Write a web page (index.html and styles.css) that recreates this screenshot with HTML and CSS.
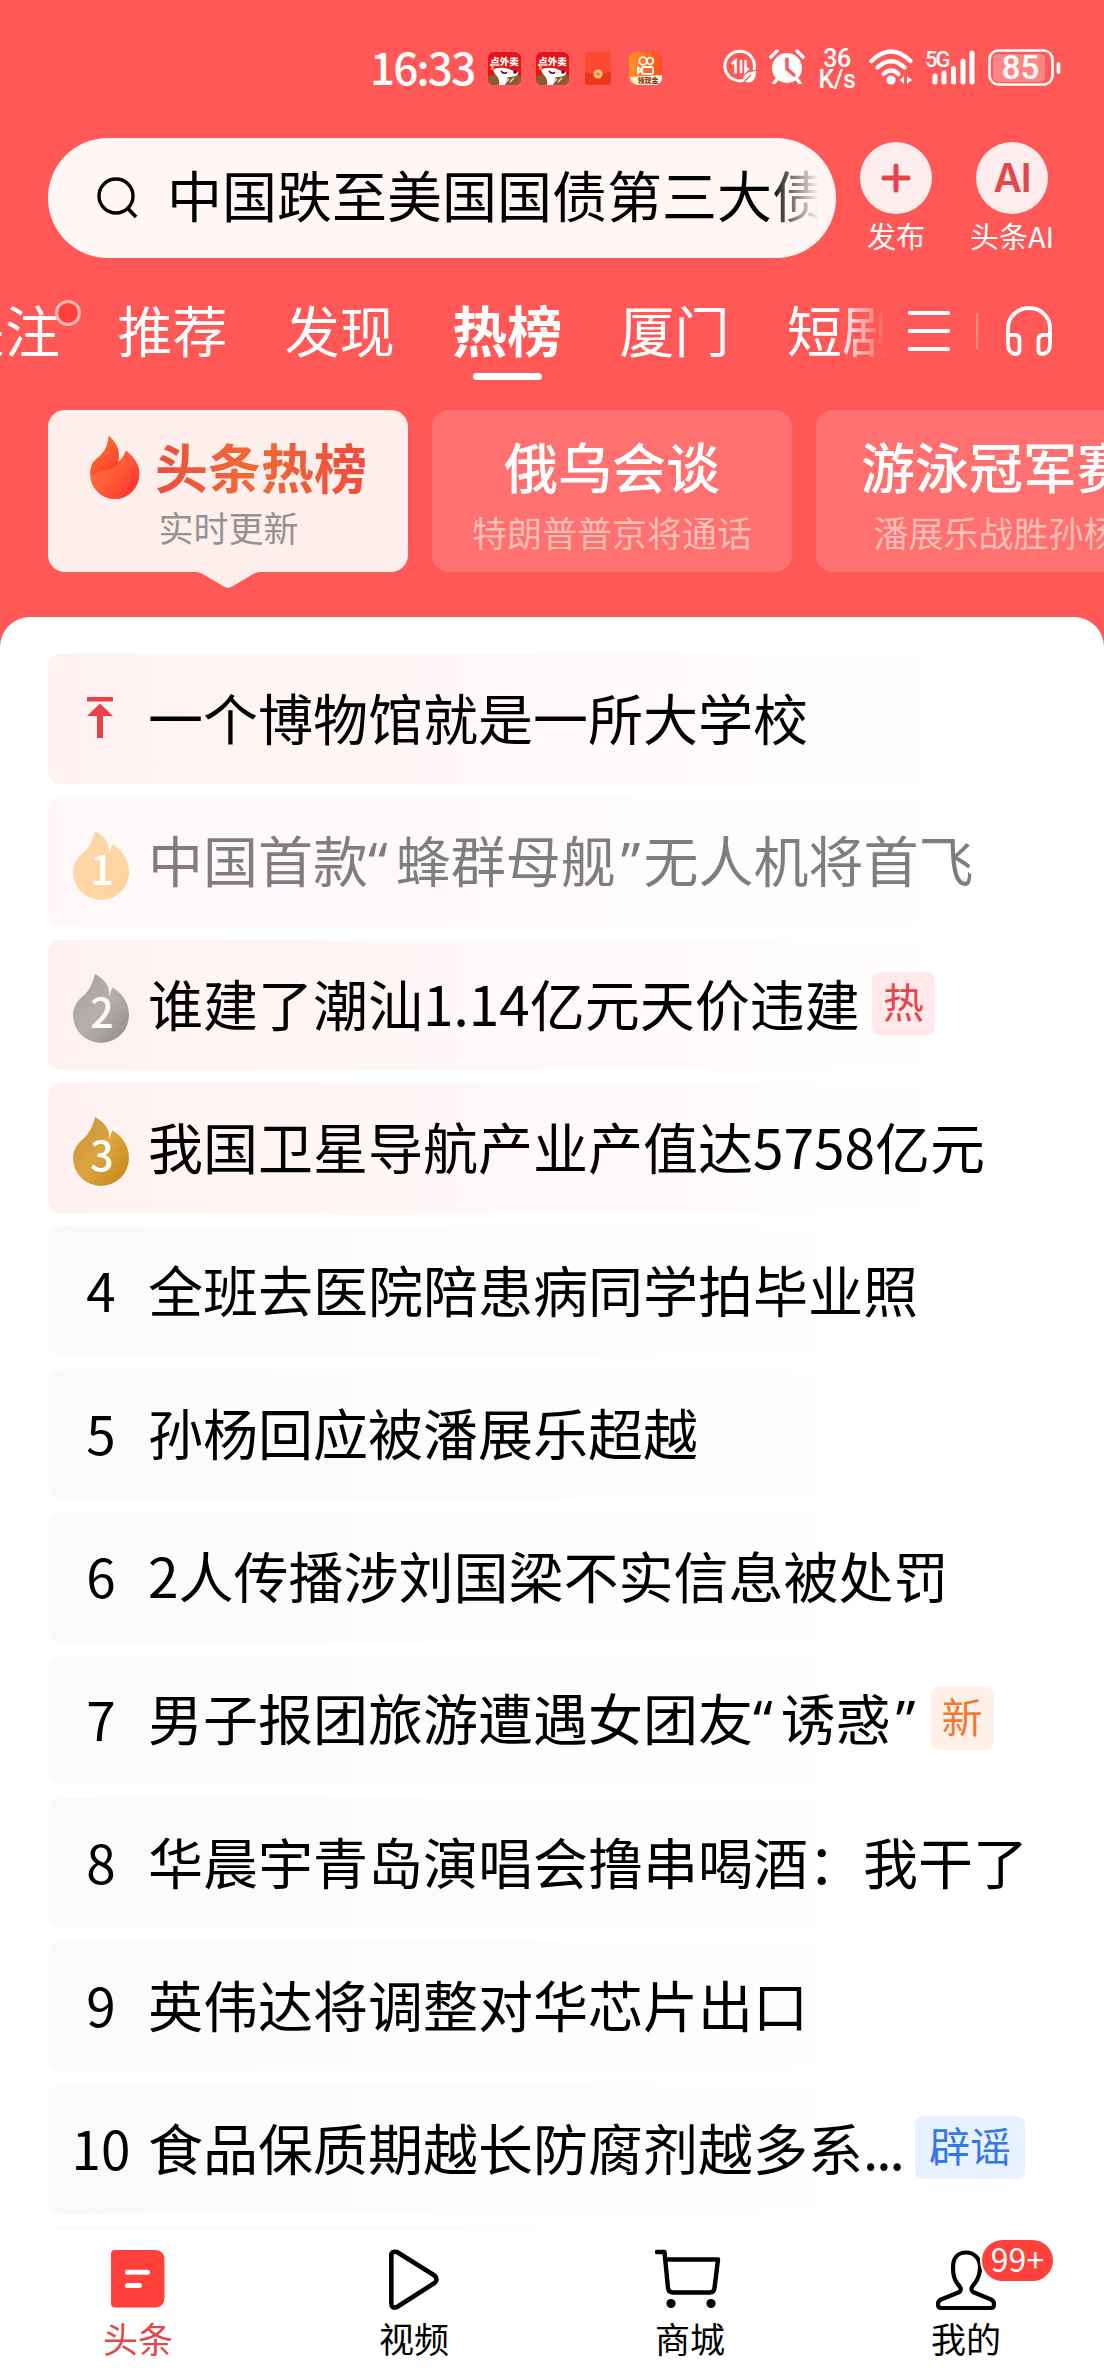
FILE: index.html
```html
<!DOCTYPE html>
<html lang="zh-CN">
<head>
<meta charset="utf-8">
<title>头条热榜</title>
<link rel="stylesheet" href="styles.css">
</head>
<body>
<svg class="defs" width="0" height="0" aria-hidden="true">
  <defs>
    <linearGradient id="gold1" x1="0" y1="0" x2="1" y2="1"><stop offset="0" stop-color="#f3ae4c"/><stop offset=".5" stop-color="#ffb04c"/><stop offset="1" stop-color="#ffa53c"/></linearGradient>
    <linearGradient id="silver" x1="0" y1="0" x2="1" y2="1"><stop offset="0" stop-color="#a29f9c"/><stop offset=".5" stop-color="#b3b0ad"/><stop offset="1" stop-color="#908c88"/></linearGradient>
    <linearGradient id="bronze" x1="0" y1="0" x2="1" y2="1"><stop offset="0" stop-color="#c79040"/><stop offset=".5" stop-color="#dba53e"/><stop offset="1" stop-color="#c38510"/></linearGradient>
    <linearGradient id="fire" x1="0" y1="0" x2="1" y2="1"><stop offset="0" stop-color="#ff7a3c"/><stop offset=".5" stop-color="#ff6038"/><stop offset="1" stop-color="#ff2a30"/></linearGradient>
    <linearGradient id="fireLobe" x1="0" y1="0" x2=".6" y2="1"><stop offset="0" stop-color="#f5863c"/><stop offset="1" stop-color="#ff3d2c"/></linearGradient>
    <linearGradient id="ks" x1="0" y1="0" x2="1" y2="0"><stop offset="0" stop-color="#ff9426"/><stop offset="1" stop-color="#ff4a20"/></linearGradient>
    <symbol id="medal" viewBox="0 0 56 69"><path d="M22 0C29 4 34 9 35.5 14C36.5 18 36 21 37 23C37 19 38 16 39.5 13.5C46 17 56 26 56 41A28 28 0 0 1 0 41C0 34 4 27 10 22C16 17 20 9 22 0Z"/></symbol>
    <symbol id="takeout" viewBox="0 0 33 33">
      <rect width="33" height="33" rx="6" fill="#e6131c"/>
      <path d="M0 24C8 22 25 22 33 24V27A6 6 0 0 1 27 33H6A6 6 0 0 1 0 27Z" fill="#8a5a31"/>
      <path d="M5 18C8 15 18 15 23 18L30 20C31 24 26 25 20 25L17 33H11C12 28 10 25 7 22Z" fill="#fff"/>
      <path d="M13 19q3 4 6 1" stroke="#2a1712" stroke-width="1.6" fill="none"/>
      <circle cx="27" cy="20" r="1.8" fill="#1d1513"/>
      <path d="M2 12l3 4-2 1" stroke="#f0a33a" stroke-width="2" fill="none"/>
      <path d="M18 30l3-3M22 30l4-4" stroke="#f4dfc2" stroke-width="1.3"/>
      <text x="16.5" y="12.5" text-anchor="middle" class="tiny">点外卖</text>
    </symbol>
  </defs>
</svg>
<div class="page">
  <div class="status">
    <span class="clock">16:33</span>
    <div class="apps">
      <svg width="33" height="33"><use href="#takeout"/></svg>
      <svg width="33" height="33"><use href="#takeout"/></svg>
      <svg class="packet" width="26" height="33" viewBox="0 0 26 33"><rect width="26" height="33" rx="3" fill="#fa4a32"/><path d="M0 20Q13 24 26 20V30a3 3 0 0 1-3 3H3a3 3 0 0 1-3-3Z" fill="#ee351d"/><circle cx="13" cy="22" r="4.5" fill="#fbc06a"/><circle cx="13" cy="22" r="1.6" fill="#c77a38"/></svg>
      <svg width="33" height="33" viewBox="0 0 33 33"><rect width="33" height="33" rx="7" fill="url(#ks)"/><g fill="none" stroke="#fff" stroke-width="1.8"><circle cx="14" cy="9" r="3.8"/><circle cx="21" cy="9" r="3.3"/><rect x="13" y="15" width="11" height="7" rx="1.5"/><path d="M13 18L9 15.5V21Z"/></g><path d="M1 25L33 23V26A7 7 0 0 1 26 33H8Q2 31 1 25Z" fill="#fff3df"/><text x="19" y="31" text-anchor="middle" class="tiny tiny--dark">领现金</text></svg>
    </div>
    <div class="system">
      <svg width="34" height="35" viewBox="0 0 34 35"><path d="M31 21A14.8 14.8 0 1 0 20 31.5" fill="none" stroke="#fff" stroke-width="3"/><path d="M8.500 15l4-3.500v13M18 11v13M22.500 11v11l3-3" fill="none" stroke="#fff" stroke-width="2.600"/><path d="M20 33C19 25 25 23 33 22C33 30 30 35 23 33Z" fill="#fff"/><path d="M20 34l8-8" stroke="#ff5857" stroke-width="1.3"/></svg>
      <svg width="36" height="35" viewBox="0 0 36 35"><circle cx="18" cy="19" r="15" fill="#fff"/><path d="M2 8l6-6M34 8l-6-6M5 34l4-5M31 34l-4-5" stroke="#fff" stroke-width="3.5" stroke-linecap="round"/><path d="M18 10v10l7 6" stroke="#ff5857" stroke-width="3.5" fill="none" stroke-linecap="round"/></svg>
      <span class="speed"><span>36</span><span>K/s</span></span>
      <svg width="44" height="36" viewBox="0 0 44 36"><g fill="none" stroke="#fff" stroke-width="4.2" stroke-linecap="round"><path d="M2.5 12Q22-7 41.5 12"/><path d="M8.5 18.5Q22 6 35.5 18.5"/><path d="M14.5 25Q22 18 29.5 25"/></g><circle cx="22" cy="31" r="4.6" fill="#fff"/><path d="M31 31l4-4v8zM43 31l-5-4v8z" fill="#fff"/></svg>
      <svg width="51" height="36" viewBox="0 0 51 36"><text x="0" y="17.500" class="net">5G</text><path d="M10 27v6M19 24v9M28.500 19.500v13.500M38 12v21M47 4v29" stroke="#fff" stroke-width="5" stroke-linecap="round"/></svg>
      <svg width="74" height="38" viewBox="0 0 74 38"><rect x="5" y="5" width="52" height="28" rx="5" fill="#fff" opacity=".27"/><rect x="1.500" y="1.500" width="63" height="34" rx="9" fill="none" stroke="#fff" stroke-width="2.600"/><path d="M70.500 15v8" stroke="#fff" stroke-width="3.800" stroke-linecap="round"/><text x="32.500" y="30" text-anchor="middle" class="batt">85</text></svg>
    </div>
  </div>

  <div class="top">
    <div class="search">
      <svg width="44" height="44" viewBox="0 0 44 44"><circle cx="20" cy="20" r="17" fill="none" stroke="#000" stroke-width="3.400"/><path d="M31.500 32L40 41" stroke="#000" stroke-width="3.600"/></svg>
      <span class="query">中国跌至美国国债第三大债</span>
    </div>
    <div class="action">
      <span class="disc"><svg width="30" height="30" viewBox="0 0 30 30"><path d="M15 3v24M3 15h24" stroke="#e2474b" stroke-width="5" stroke-linecap="round"/></svg></span>
      <span>发布</span>
    </div>
    <div class="action action--ai">
      <span class="disc disc--ai">AI</span>
      <span>头条AI</span>
    </div>
  </div>

  <div class="tabbar">
    <div class="tabs">
      <span class="tab tab--first">关注<i class="dot"></i></span>
      <span class="tab">推荐</span>
      <span class="tab">发现</span>
      <span class="tab tab--on">热榜</span>
      <span class="tab">厦门</span>
      <span class="tab">短剧</span>
    </div>
    <svg class="menu" width="42" height="42" viewBox="0 0 42 42"><path d="M2 3h38M2 21h38M2 39h38" stroke="#fff" stroke-width="4.200" stroke-linecap="round"/></svg>
    <span class="sep"></span>
    <svg class="phones" width="46" height="50" viewBox="0 0 46 50"><g fill="none" stroke="#fff" stroke-width="3.800"><path d="M2 31V22a21 20 0 0 1 42 0V31"/><path d="M2 29h7q4.500 0 4.500 4.500V44q0 4-4 4Q2 47 2 38Z"/><path d="M44 29h-7q-4.500 0-4.500 4.500V44q0 4 4 4Q44 47 44 38Z"/></g></svg>
  </div>

  <div class="cards">
    <div class="card card--on">
      <div class="brand">
        <svg width="50" height="64" viewBox="0 0 50 64"><path d="M18.700 0C26 6 30 13 28 26C32 23 34 19 36 14.500C44 21 49.500 28 49.500 38A24.700 25 0 0 1 0 38C0 30 4 25 10 20C16 14 18 8 18.700 0Z" fill="url(#fire)"/><path d="M18.700 0C26 6 31 14 28 26C26 35 12 33 2 39C-2 28 6 23 10 20C16 14 18 8 18.700 0Z" fill="url(#fireLobe)"/></svg>
        <span>头条热榜</span>
      </div>
      <span class="sub sub--on">实时更新</span>
      <svg class="pointer" width="72" height="17" viewBox="0 0 72 17"><path d="M0 0H72V.500Q64 .500 58 5L40 15.500Q36 18 32 15.500L14 5Q8 .500 0 .500Z" fill="#feefed"/></svg>
    </div>
    <div class="card"><span class="title">俄乌会谈</span><span class="sub">特朗普普京将通话</span></div>
    <div class="card"><span class="title">游泳冠军赛</span><span class="sub">潘展乐战胜孙杨</span></div>
  </div>

  <div class="sheet">
    <div class="row row--hot"><span class="rank"><svg width="28" height="42" viewBox="0 0 28 42"><path d="M1 0H27V4.500H1ZM14 6.500L27 19H17V41H11V19H1Z" fill="#ea4144"/></svg></span><span class="text">一个博物馆就是一所大学校</span></div>
    <div class="row row--hot row--read"><span class="rank"><svg class="flame" width="56" height="69"><use href="#medal" fill="url(#gold1)"/><text x="29" y="54" text-anchor="middle" class="num">1</text></svg></span><span class="text">中国首款<q class="open">“</q>蜂群母舰<q>”</q>无人机将首飞</span></div>
    <div class="row row--hot"><span class="rank"><svg class="flame" width="56" height="69"><use href="#medal" fill="url(#silver)"/><text x="29" y="54" text-anchor="middle" class="num">2</text></svg></span><span class="text">谁建了潮汕1.14亿元天价违建</span><span class="tag tag--hot">热</span></div>
    <div class="row row--hot"><span class="rank"><svg class="flame" width="56" height="69"><use href="#medal" fill="url(#bronze)"/><text x="29" y="54" text-anchor="middle" class="num">3</text></svg></span><span class="text">我国卫星导航产业产值达5758亿元</span></div>
    <div class="row"><span class="rank">4</span><span class="text">全班去医院陪患病同学拍毕业照</span></div>
    <div class="row"><span class="rank">5</span><span class="text">孙杨回应被潘展乐超越</span></div>
    <div class="row"><span class="rank">6</span><span class="text">2人传播涉刘国梁不实信息被处罚</span></div>
    <div class="row"><span class="rank">7</span><span class="text">男子报团旅游遭遇女团友<q class="open">“</q>诱惑<q>”</q></span><span class="tag tag--new">新</span></div>
    <div class="row"><span class="rank">8</span><span class="text">华晨宇青岛演唱会撸串喝酒：我干了</span></div>
    <div class="row"><span class="rank">9</span><span class="text">英伟达将调整对华芯片出口</span></div>
    <div class="row"><span class="rank">10</span><span class="text">食品保质期越长防腐剂越多系<span class="more">...</span></span><span class="tag tag--fact">辟谣</span></div>
    <div class="row"></div>
  </div>

  <div class="nav">
    <div class="item item--on"><svg width="60" height="60" viewBox="0 0 60 60"><path d="M7 1H47Q56.500 1 56.500 11V48Q56.500 58.500 47 58.500H7Q3 58.500 3 54.500V5Q3 1 7 1Z" fill="#ff403b"/><path d="M19.500 23.300h20M19.500 36.500h12" stroke="#fff" stroke-width="5" stroke-linecap="round"/></svg><span>头条</span></div>
    <div class="item"><svg width="60" height="62" viewBox="0 0 60 62"><path d="M7.300 7Q7.300 1.500 13 3L50.500 26.500Q54.500 30.500 50.500 34L13 58Q7.300 60 7.300 54Z" fill="none" stroke="#000" stroke-width="4.600" stroke-linejoin="round"/></svg><span>视频</span></div>
    <div class="item"><svg class="cart" width="66" height="60" viewBox="0 0 66 60"><path d="M2 3h7.500L13 39Q13.500 43.500 18 43.500H55Q59 43.500 59.500 39L63 10.500H10" fill="none" stroke="#000" stroke-width="4.400" stroke-linecap="round" stroke-linejoin="round"/><circle cx="16" cy="54.500" r="4.600"/><circle cx="56" cy="54.500" r="4.600"/></svg><span>商城</span></div>
    <div class="item"><svg width="62" height="62" viewBox="0 0 62 62"><path d="M31 3.500C22.500 3.500 18 9.500 18 18.500C18 25 19 30 22 34C25 38 27.500 40 24.500 43L6 50.500Q3 52 3 55Q3 59 6 59H56Q59 59 59 55Q59 52 56 50.500L38 43C34.500 40 37.500 37 40 34C43 30 45 25 45 18.500C45 9.500 39.500 3.500 31 3.500Z" fill="none" stroke="#000" stroke-width="4.200" stroke-linejoin="round"/></svg><span>我的</span><b class="badge">99+</b></div>
  </div>
</div>
</body>
</html>
```
FILE: styles.css
```css
* { box-sizing: border-box; }
body {
  margin: 0;
  background: #fff;
  font-family: "Noto Sans CJK SC", sans-serif;
  color: #000;
}
svg { display: block; flex: none; }
.defs { position: absolute; }
.page {
  width: 1104px;
  height: 2376px;
  overflow: hidden;
  background: #ff5857;
  display: flex;
  flex-direction: column;
}

/* status bar */
.status {
  height: 138px;
  padding: 47px 44px 0 370px;
  display: flex;
  align-items: flex-start;
  color: #fff;
}
.clock {
  width: 118px;
  font-size: 44px;
  font-weight: 500;
  line-height: 38px;
  letter-spacing: -1.8px;
  white-space: nowrap;
}
.apps { display: flex; gap: 14.5px; padding-top: 5px; }
.apps .packet { margin: 0 3px 0 2px; }
.system { display: flex; flex: 1; justify-content: flex-end; gap: 12px; margin: 2px -2px 0 0; }
.speed {
  display: flex;
  flex-direction: column;
  align-items: center;
  width: 40px;
  font-family: Roboto, sans-serif;
  font-size: 25px;
  line-height: 21px;
  font-weight: 500;
  margin-top: -1px;
}
.speed span { letter-spacing: -.5px; }
.tiny { font-size: 9.5px; font-weight: 900; fill: #fff; }
.tiny--dark { font-size: 7px; fill: #8d3b22; }
.net { font: 500 22px Roboto, sans-serif; fill: #fff; letter-spacing: -2px; }
.batt { font: 500 33px Roboto, sans-serif; fill: #fff; }

/* search */
.top { display: flex; padding-left: 48px; height: 160px; color: #fff; }
.search {
  width: 788px;
  height: 120px;
  border-radius: 60px;
  background: #fff6f5;
  display: flex;
  align-items: center;
  padding: 0 16px 0 48px;
  color: #000;
}
.query {
  flex: 1;
  margin-left: 27px;
  font-size: 55px;
  line-height: 80px;
  margin-top: -11px;
  overflow: hidden;
  white-space: nowrap;
  -webkit-mask-image: linear-gradient(to right, #000 602px, transparent 652px);
  mask-image: linear-gradient(to right, #000 602px, transparent 652px);
}
.action {
  width: 88px;
  margin: 4px 0 0 16px;
  display: flex;
  flex-direction: column;
  align-items: center;
  gap: 4px;
  font-size: 29px;
  line-height: 34px;
  white-space: nowrap;
}
.action--ai { margin-left: 28px; }
.disc {
  width: 72px;
  height: 72px;
  border-radius: 50%;
  background: #ffeded;
  display: flex;
  align-items: center;
  justify-content: center;
}
.disc--ai { color: #e2474b; font: 600 39px/72px Inter, sans-serif; letter-spacing: -1px; }

/* channel tabs */
.tabbar { display: flex; align-items: center; height: 112px; padding-bottom: 46px; }
.tabs {
  width: 890px;
  height: 112px;
  display: flex;
  gap: 57.4px;
  overflow: hidden;
  color: #fff;
  font-size: 55px;
  line-height: 60px;
  margin-bottom: -46px;
  -webkit-mask-image: linear-gradient(to right, #000 838px, transparent 888px);
  mask-image: linear-gradient(to right, #000 838px, transparent 888px);
}
.tab { position: relative; flex: none; width: 110px; height: 90px; }
.tab--first { margin-left: -50px; }
.tab--on { font-weight: 700; }
.tab--on::after {
  content: "";
  position: absolute;
  left: 21px;
  top: 75px;
  width: 69px;
  height: 7px;
  border-radius: 4px;
  background: #fff;
}
.dot {
  position: absolute;
  left: 105px;
  top: 2px;
  width: 26px;
  height: 26px;
  border-radius: 50%;
  background: #ff403b;
  border: 3px solid #ffb5b1;
}
.menu { margin-left: 18px; }
.sep { width: 2px; height: 36px; margin: 0 28px 0 26px; background: #ff8c85; }

/* topic cards */
.cards { display: flex; gap: 24px; padding-left: 48px; height: 207px; }
.card {
  flex: none;
  position: relative;
  width: 360px;
  height: 162px;
  border-radius: 17px;
  background: #ff7171;
  color: #fff;
  display: flex;
  flex-direction: column;
  align-items: center;
}
.card--on { background: #feefed; }
.title { font-size: 54px; font-weight: 500; line-height: 60px; margin-top: 26px; }
.sub { font-size: 35px; line-height: 40px; margin-top: 16px; color: #ffbdb5; }
.sub--on { color: #969292; margin: 2px 0 0 1px; }
.brand {
  display: flex;
  align-self: flex-start;
  align-items: flex-start;
  gap: 15px;
  margin: 26px 0 0 42px;
  font-size: 53px;
  font-weight: 700;
  line-height: 60px;
  height: 69px;
}
.brand span {
  background: linear-gradient(90deg, #e9503f, #f06a35 45%, #ee4c3c);
  -webkit-background-clip: text;
  background-clip: text;
  color: transparent;
}
.pointer { position: absolute; left: 144px; top: 161px; }

/* ranking */
.sheet {
  height: 1613px;
  overflow: hidden;
  background: #fff;
  border-radius: 30px 30px 0 0;
  padding: 37px 48px 0;
  display: flex;
  flex-direction: column;
  gap: 13px;
}
.row {
  flex: none;
  display: flex;
  align-items: center;
  height: 130px;
  border-radius: 12px;
  background: linear-gradient(90deg, #fafafa, #fff 92%);
  padding-left: 17px;
  white-space: nowrap;
}
.row--hot { background: linear-gradient(90deg, #fff1f1, #fff 92%); }
.row--read { opacity: .5; }
.rank {
  width: 72px;
  display: flex;
  justify-content: center;
  font-size: 53px;
  line-height: 70px;
  margin: -5px 11px 0 0;
}
.rank svg { margin-top: 3px; margin-right: 2px; }
.rank .flame { margin-top: 11px; margin-right: 1px; }
.num { font-size: 41px; font-weight: 500; fill: #fff; }
.text { font-size: 55px; line-height: 80px; margin-top: -6px; }
.text q { quotes: none; font-family: "Noto Sans", sans-serif; letter-spacing: 3px; margin-left: 5px; }
.text q.open { margin: 0 5px 0 0; }
.text q::before, .text q::after { content: none; }
.more { letter-spacing: -2px; }
.tag {
  height: 63px;
  margin: -3px 0 0 12px;
  padding: 0 11px;
  border-radius: 8px;
  font-size: 41px;
  line-height: 57px;
}
.tag--hot { background: #ffe9eb; color: #e2474b; }
.tag--new { background: #fff1e8; color: #f07a35; }
.tag--fact { background: #e8f1ff; color: #3377e8; padding: 0 14px; }

/* bottom bar */
.nav { flex: none; display: flex; height: 146px; background: #fff; }
.item {
  position: relative;
  flex: 1;
  display: flex;
  flex-direction: column;
  align-items: center;
  padding-top: 19px;
  font-size: 35px;
}
.item svg { margin-bottom: auto; }
.item .cart { margin-right: 5px; }
.item span { line-height: 40px; margin-bottom: 18px; }
.item--on { color: #e2474b; }
.badge {
  position: absolute;
  left: 152px;
  top: 8px;
  width: 75px;
  height: 45px;
  border: 2px solid #fff;
  border-radius: 23px;
  background: #ff403b;
  color: #fff;
  font-size: 32px;
  font-weight: 400;
  line-height: 37px;
  text-align: center;
}
```
